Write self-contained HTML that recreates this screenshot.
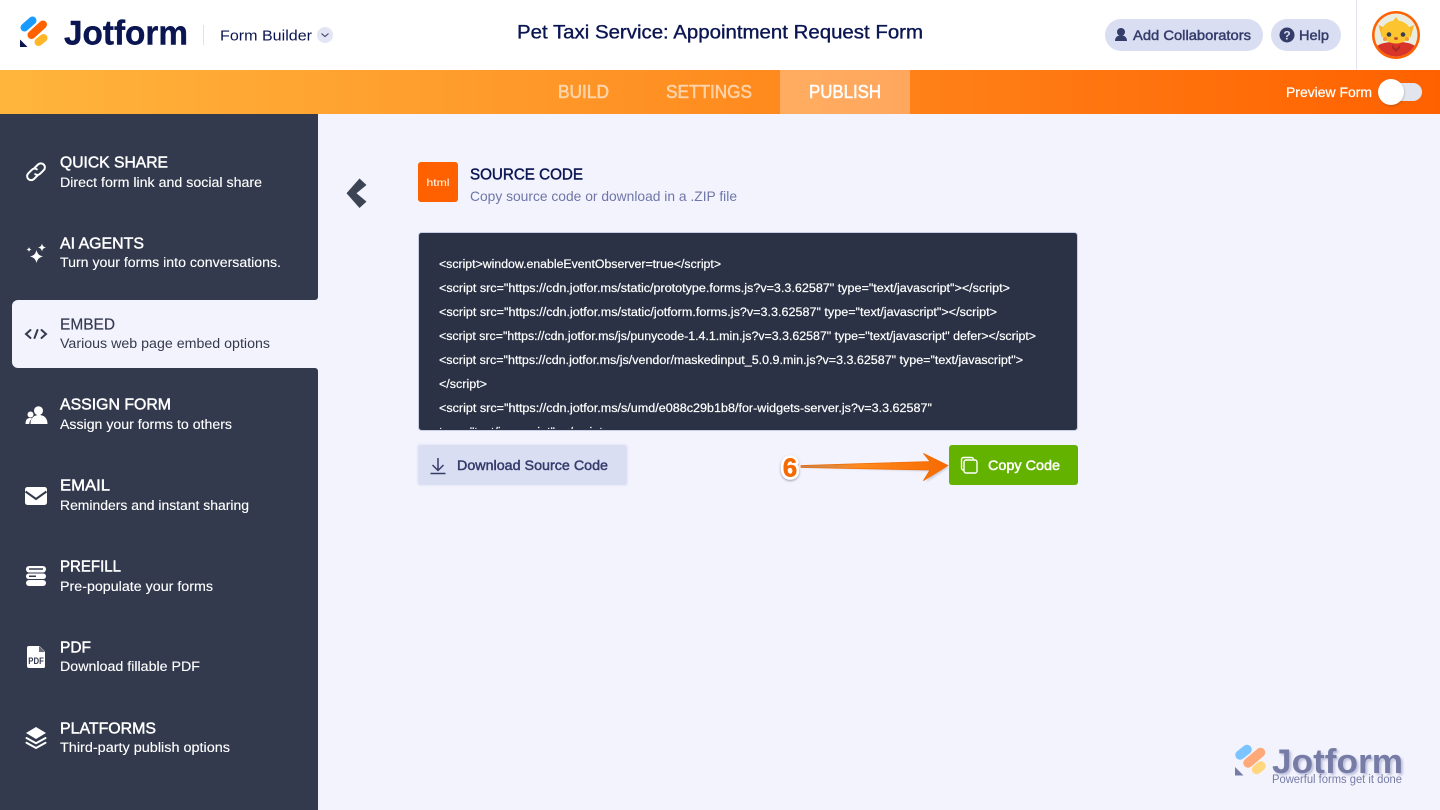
<!DOCTYPE html>
<html><head><meta charset="utf-8"><title>Source Code</title>
<style>
html,body{margin:0;padding:0;width:1440px;height:810px;overflow:hidden;background:#f3f3fe}
svg{display:block}
text{font-family:"Liberation Sans",sans-serif}
.t{font-size:15.5px;fill:#fff;stroke:#fff;stroke-width:.45}
.s{font-size:13.5px;fill:#fff;stroke:#fff;stroke-width:.12}
.c{font-size:11.5px;fill:#fff;stroke:#fff;stroke-width:.2}
</style></head><body>
<svg width="1440" height="810" viewBox="0 0 1440 810" xmlns="http://www.w3.org/2000/svg">
<defs>
<linearGradient id="bar" x1="0" y1="0" x2="1" y2="0"><stop offset="0" stop-color="#ffb53c"/><stop offset=".35" stop-color="#ff9a2a"/><stop offset="1" stop-color="#ff6100"/></linearGradient>
<linearGradient id="arr" x1="0" y1="0" x2="1" y2="0"><stop offset="0" stop-color="#b98a60"/><stop offset=".4" stop-color="#ff8a1e"/><stop offset="1" stop-color="#f56a00"/></linearGradient>
<filter id="sh" x="-20%" y="-20%" width="140%" height="140%"><feGaussianBlur stdDeviation="1.100"/></filter>
<filter id="sh2" x="-20%" y="-40%" width="140%" height="180%"><feGaussianBlur stdDeviation="1"/></filter>
<clipPath id="cb"><rect x="419" y="233" width="658" height="196"/></clipPath>
<clipPath id="av"><circle cx="1396" cy="35" r="21.500"/></clipPath>
</defs>
<rect width="1440" height="810" fill="#f3f3fe"/>
<!-- top -->
<rect width="1440" height="70" fill="#fff"/>
<g fill="none" stroke-width="8" stroke-linecap="round">
<path d="M24.500 27.500L32.500 20.500" stroke="#1a9bff"/>
<path d="M31.500 35L43 24.500" stroke="#ff6100"/>
<path d="M38.500 42L43.500 38" stroke="#ffb629"/>
</g>
<path d="M20 39.500v7.500h7.500z" fill="#0a1551"/>
<text x="64" y="44.500" font-size="34" font-weight="700" fill="#0a1551" stroke="#0a1551" stroke-width=".4" textLength="124" lengthAdjust="spacingAndGlyphs">Jotform</text>
<rect x="203" y="25" width="1" height="20" fill="#dfe2ee"/>
<text x="220" y="40.500" font-size="15" fill="#0a1551" textLength="92" lengthAdjust="spacingAndGlyphs">Form Builder</text>
<circle cx="325" cy="35" r="8" fill="#e3e5f5"/>
<path d="M321.500 33.500l3.500 3 3.500-3" fill="none" stroke="#3a4066" stroke-width="1.100"/>
<text x="517" y="38.500" font-size="19" fill="#0a1551" stroke="#0a1551" stroke-width=".35" textLength="406" lengthAdjust="spacingAndGlyphs">Pet Taxi Service: Appointment Request Form</text>
<rect x="1105" y="19" width="158" height="32" rx="16" fill="#dadef3"/>
<circle cx="1121" cy="32" r="4" fill="#343c6a"/>
<path d="M1115 41c0-4 2.500-5.500 6-5.500s6 1.500 6 5.500z" fill="#343c6a"/>
<text x="1133" y="40" font-size="14" fill="#343c6a" stroke="#343c6a" stroke-width=".45" textLength="118" lengthAdjust="spacingAndGlyphs">Add Collaborators</text>
<rect x="1271" y="19" width="70" height="32" rx="16" fill="#dadef3"/>
<circle cx="1287" cy="35" r="7.500" fill="#343c6a"/>
<text x="1287" y="39.500" font-size="12" font-weight="700" fill="#dadef3" text-anchor="middle">?</text>
<text x="1299" y="40" font-size="14" fill="#343c6a" stroke="#343c6a" stroke-width=".45" textLength="30" lengthAdjust="spacingAndGlyphs">Help</text>
<rect x="1356" y="0" width="1" height="70" fill="#e3e5ee"/>
<!-- avatar -->
<circle cx="1396" cy="35" r="24" fill="#ff6100"/>
<circle cx="1396" cy="35" r="21.500" fill="#e9ecdf"/>
<g clip-path="url(#av)">
<path d="M1376 47C1382 40 1410 40 1416 47V60H1376z" fill="#d8352a"/>
<path d="M1378.500 25l6.500 3-3 10zM1414 25l-6.500 3 3 10z" fill="#f9b52a"/>
<path d="M1396 17l4.500 6h-9z" fill="#fbbf2a"/>
<ellipse cx="1396" cy="32" rx="14.500" ry="11.500" fill="#fcc52f"/>
<circle cx="1389" cy="34.500" r="2.300" fill="#3a3f4c"/><circle cx="1403" cy="34.500" r="2.300" fill="#3a3f4c"/>
<ellipse cx="1396" cy="38.500" rx="2" ry="1.500" fill="#c2502a"/>
<circle cx="1385" cy="39" r="2" fill="#f59a3a"/><circle cx="1407" cy="39" r="2" fill="#f59a3a"/>
<path d="M1392 45l4 4 4-4v3l-4 4-4-4z" fill="#ab2a22"/>
</g>
<!-- bar -->
<rect y="70" width="1440" height="44" fill="url(#bar)"/>
<rect x="780" y="70" width="130" height="44" fill="#fff" fill-opacity=".3"/>
<text x="558" y="98" font-size="18" fill="#fff" fill-opacity=".55" stroke="#fff" stroke-opacity=".55" stroke-width=".5" textLength="51" lengthAdjust="spacingAndGlyphs">BUILD</text>
<text x="666" y="98" font-size="18" fill="#fff" fill-opacity=".55" stroke="#fff" stroke-opacity=".55" stroke-width=".5" textLength="86" lengthAdjust="spacingAndGlyphs">SETTINGS</text>
<text x="809" y="98" font-size="18" fill="#fff" stroke="#fff" stroke-width=".5" textLength="72" lengthAdjust="spacingAndGlyphs">PUBLISH</text>
<text x="1286" y="97" font-size="14" fill="#fff" stroke="#fff" stroke-width=".25" textLength="86" lengthAdjust="spacingAndGlyphs">Preview Form</text>
<rect x="1380" y="83" width="42" height="18" rx="9" fill="#e3e5ee"/>
<circle cx="1391.500" cy="93" r="13" fill="#000" fill-opacity=".2" filter="url(#sh2)"/>
<circle cx="1391" cy="92" r="13" fill="#fff"/>
<!-- sidebar -->
<rect y="114" width="318" height="696" fill="#343a4e"/>
<path d="M318 300h-300a6 6 0 0 0-6 6v56a6 6 0 0 0 6 6h300z" fill="#f3f3fe"/>
<path d="M318 297v3h-3a3 3 0 0 0 3-3zM318 371v-3h-3a3 3 0 0 1 3 3z" fill="#f3f3fe"/>

<text class="t" x="60" y="167.500" textLength="108" lengthAdjust="spacingAndGlyphs">QUICK SHARE</text>
<text class="s" x="60" y="187" textLength="202" lengthAdjust="spacingAndGlyphs">Direct form link and social share</text>
<text class="t" x="60" y="248.500" textLength="84" lengthAdjust="spacingAndGlyphs">AI AGENTS</text>
<text class="s" x="60" y="267" textLength="221" lengthAdjust="spacingAndGlyphs">Turn your forms into conversations.</text>
<text class="t" x="60" y="329.500" style="fill:#343a4e;stroke:#343a4e;stroke-width:.2" textLength="55" lengthAdjust="spacingAndGlyphs">EMBED</text>
<text class="s" x="60" y="348" style="fill:#343a4e;stroke:none" textLength="210" lengthAdjust="spacingAndGlyphs">Various web page embed options</text>
<text class="t" x="60" y="409.500" textLength="111" lengthAdjust="spacingAndGlyphs">ASSIGN FORM</text>
<text class="s" x="60" y="429" textLength="172" lengthAdjust="spacingAndGlyphs">Assign your forms to others</text>
<text class="t" x="60" y="490.500" textLength="50" lengthAdjust="spacingAndGlyphs">EMAIL</text>
<text class="s" x="60" y="510" textLength="189" lengthAdjust="spacingAndGlyphs">Reminders and instant sharing</text>
<text class="t" x="60" y="571.500" textLength="61" lengthAdjust="spacingAndGlyphs">PREFILL</text>
<text class="s" x="60" y="591" textLength="153" lengthAdjust="spacingAndGlyphs">Pre-populate your forms</text>
<text class="t" x="60" y="652.500" textLength="31" lengthAdjust="spacingAndGlyphs">PDF</text>
<text class="s" x="60" y="671" textLength="140" lengthAdjust="spacingAndGlyphs">Download fillable PDF</text>
<text class="t" x="60" y="733.500" textLength="96" lengthAdjust="spacingAndGlyphs">PLATFORMS</text>
<text class="s" x="60" y="752" textLength="170" lengthAdjust="spacingAndGlyphs">Third-party publish options</text>

<!-- icons -->
<g fill="none" stroke="#fff" stroke-width="2" stroke-linecap="round">
<path d="M34.500 168l3.500-3.500a4 4 0 0 1 5.700 5.700l-3.500 3.500a4 4 0 0 1-5 .5"/>
<path d="M37.500 175.500l-3.500 3.500a4 4 0 0 1-5.700-5.700l3.500-3.500a4 4 0 0 1 5-.5"/>
</g>
<g fill="#fff">
<path d="M36.500 250c1 4 2.500 5.500 6.500 6.500-4 1-5.500 2.500-6.500 6.500-1-4-2.500-5.500-6.500-6.500 4-1 5.500-2.500 6.500-6.500z"/>
<path d="M42 243.500c.6 2.500 1.500 3.400 4 4-2.500.6-3.400 1.500-4 4-.6-2.500-1.500-3.400-4-4 2.500-.6 3.400-1.500 4-4z"/>
<path d="M29 247c.4 1.600.9 2.100 2.700 2.500-1.800.4-2.300.9-2.700 2.500-.4-1.600-.9-2.100-2.700-2.500 1.800-.4 2.300-.9 2.700-2.500z"/>
</g>
<g fill="none" stroke="#343a4e" stroke-width="2" stroke-linecap="round">
<path d="M30.500 330l-4.500 4 4.500 4M41.500 330l4.500 4-4.500 4M37.500 330l-3 8"/>
</g>
<g fill="#fff">
<circle cx="38.500" cy="410.700" r="4.500"/><path d="M30.500 424c0-6 3.500-9 8.500-9s8.500 3 8.500 9z"/>
<circle cx="30.500" cy="414.500" r="3"/><path d="M25.500 424c0-4 1.500-6 4.500-6 1 0 1.500.2 2 .5-1.500 1.500-2.500 3-2.800 5.500z"/>
<rect x="25" y="487" width="22" height="18" rx="2.500"/>
<rect x="26" y="566" width="20" height="6.500" rx="3.200"/>
<rect x="26" y="573.500" width="20" height="5.500" rx="2.700"/>
<rect x="26" y="580" width="20" height="6" rx="3"/>
<path d="M29 646h10.500l5.500 5.500v15a1.500 1.500 0 0 1-1.500 1.500h-14.500a2 2 0 0 1-2-2v-18a2 2 0 0 1 2-2z"/>
<path d="M36 727l10 6-10 6-10-6z"/>
</g>
<path d="M25.500 491.500L36 499l10.500-7.500" fill="none" stroke="#343a4e" stroke-width="2"/>
<path d="M29 569h14M29 576.300h7" stroke="#343a4e" stroke-width="1.500" fill="none"/>
<path d="M26.500 738l9.500 5.200 9.500-5.200M26.500 742.800l9.500 5.200 9.500-5.200" fill="none" stroke="#fff" stroke-width="2" stroke-linecap="round"/>
<path d="M39 646v6h6z" fill="#343a4e" fill-opacity=".75"/>
<text x="28.300" y="664" font-size="9.500" font-weight="700" fill="#343a4e" textLength="15.500" lengthAdjust="spacingAndGlyphs">PDF</text>

<!-- back chevron -->
<path d="M346.500 193.300L359.500 178.500L366.500 185L356.500 193.300L366.500 201.600L359.500 208z" fill="#3c4454"/>

<!-- header -->
<rect x="418" y="162" width="40" height="40" rx="3" fill="#ff6100"/>
<text x="438" y="186" font-size="10.500" fill="#fff" text-anchor="middle" textLength="23" lengthAdjust="spacingAndGlyphs">html</text>
<text x="470" y="179.500" font-size="15.500" fill="#0a1551" stroke="#0a1551" stroke-width=".45" textLength="113" lengthAdjust="spacingAndGlyphs">SOURCE CODE</text>
<text x="470" y="201" font-size="14" fill="#6f76a7" textLength="267" lengthAdjust="spacingAndGlyphs">Copy source code or download in a .ZIP file</text>

<!-- code box -->
<rect x="418.500" y="232.500" width="659" height="198" rx="3" fill="#2b3245" stroke="#c8cee8"/>
<g clip-path="url(#cb)">
<text class="c" x="439" y="268" textLength="282" lengthAdjust="spacingAndGlyphs">&lt;script&gt;window.enableEventObserver=true&lt;/script&gt;</text>
<text class="c" x="439" y="292" textLength="571" lengthAdjust="spacingAndGlyphs">&lt;script src="https://cdn.jotfor.ms/static/prototype.forms.js?v=3.3.62587" type="text/javascript"&gt;&lt;/script&gt;</text>
<text class="c" x="439" y="316" textLength="558" lengthAdjust="spacingAndGlyphs">&lt;script src="https://cdn.jotfor.ms/static/jotform.forms.js?v=3.3.62587" type="text/javascript"&gt;&lt;/script&gt;</text>
<text class="c" x="439" y="340" textLength="597" lengthAdjust="spacingAndGlyphs">&lt;script src="https://cdn.jotfor.ms/js/punycode-1.4.1.min.js?v=3.3.62587" type="text/javascript" defer&gt;&lt;/script&gt;</text>
<text class="c" x="439" y="364" textLength="584" lengthAdjust="spacingAndGlyphs">&lt;script src="https://cdn.jotfor.ms/js/vendor/maskedinput_5.0.9.min.js?v=3.3.62587" type="text/javascript"&gt;</text>
<text class="c" x="439" y="388" textLength="48" lengthAdjust="spacingAndGlyphs">&lt;/script&gt;</text>
<text class="c" x="439" y="412" textLength="493" lengthAdjust="spacingAndGlyphs">&lt;script src="https://cdn.jotfor.ms/s/umd/e088c29b1b8/for-widgets-server.js?v=3.3.62587"</text>
<text class="c" x="439" y="436" textLength="171" lengthAdjust="spacingAndGlyphs">type="text/javascript"&gt;&lt;/script&gt;</text>
</g>

<!-- buttons -->
<rect x="416.500" y="443.500" width="212" height="43" rx="4" fill="#e9ebf8"/>
<rect x="418" y="445" width="209" height="40" rx="3" fill="#dadef3"/>
<g fill="none" stroke="#343c6a" stroke-width="1.500"><path d="M438 458v12M432.500 465l5.500 5.500 5.500-5.500M430.500 473.500h15"/></g>
<text x="457" y="470" font-size="13.500" fill="#343c6a" stroke="#343c6a" stroke-width=".45" textLength="151" lengthAdjust="spacingAndGlyphs">Download Source Code</text>
<rect x="949" y="445" width="129" height="40" rx="3" fill="#64b200"/>
<g fill="none" stroke="#fff" stroke-width="1.400"><rect x="964" y="460" width="13" height="13" rx="2"/><path d="M963.500 470a2 2 0 0 1-2-2v-8.500a2 2 0 0 1 2-2h8a2 2 0 0 1 2 2v.5"/></g>
<text x="988" y="470" font-size="13.500" fill="#fff" stroke="#fff" stroke-width=".45" textLength="72" lengthAdjust="spacingAndGlyphs">Copy Code</text>

<!-- annotation -->
<path d="M801 467L932 471L926 482L949 467z" fill="#8d8a95" fill-opacity=".45" filter="url(#sh2)"/>
<path d="M801 465.500L930 461.500L923.500 453.500L948 465.500L923.500 480.500L930 470L801 467.500z" fill="url(#arr)" stroke="#f56a00" stroke-width=".8" stroke-linejoin="round"/>
<text x="790" y="476.500" font-size="26" font-weight="700" fill="#fff" stroke="#fff" stroke-width="6" stroke-linejoin="round" text-anchor="middle" style="filter:drop-shadow(0 1px 1px rgba(90,90,110,.6))">6</text>
<text x="790" y="476.500" font-size="26" font-weight="700" fill="#f56a00" stroke="#f56a00" stroke-width=".5" text-anchor="middle">6</text>

<!-- watermark -->
<g filter="url(#sh)" opacity=".4" transform="translate(2,2)">
<text x="1272" y="773" font-size="34" font-weight="700" fill="#6f76a7" textLength="131" lengthAdjust="spacingAndGlyphs">Jotform</text>
</g>
<g fill="none" stroke-width="9.500" stroke-linecap="round">
<path d="M1240 755L1247 749.500" stroke="#7cc4ff"/>
<path d="M1248 763L1260.500 752.500" stroke="#ffa878"/>
<path d="M1256.500 769.500L1261 766" stroke="#ffd77e"/>
</g>
<path d="M1235 767v8.500h8.500z" fill="#767ca5"/>
<text x="1272" y="773" font-size="34" font-weight="700" fill="#767ca5" textLength="131" lengthAdjust="spacingAndGlyphs">Jotform</text>
<text x="1272" y="783" font-size="11.500" fill="#767ca5" textLength="130" lengthAdjust="spacingAndGlyphs">Powerful forms get it done</text>
</svg>
</body></html>
